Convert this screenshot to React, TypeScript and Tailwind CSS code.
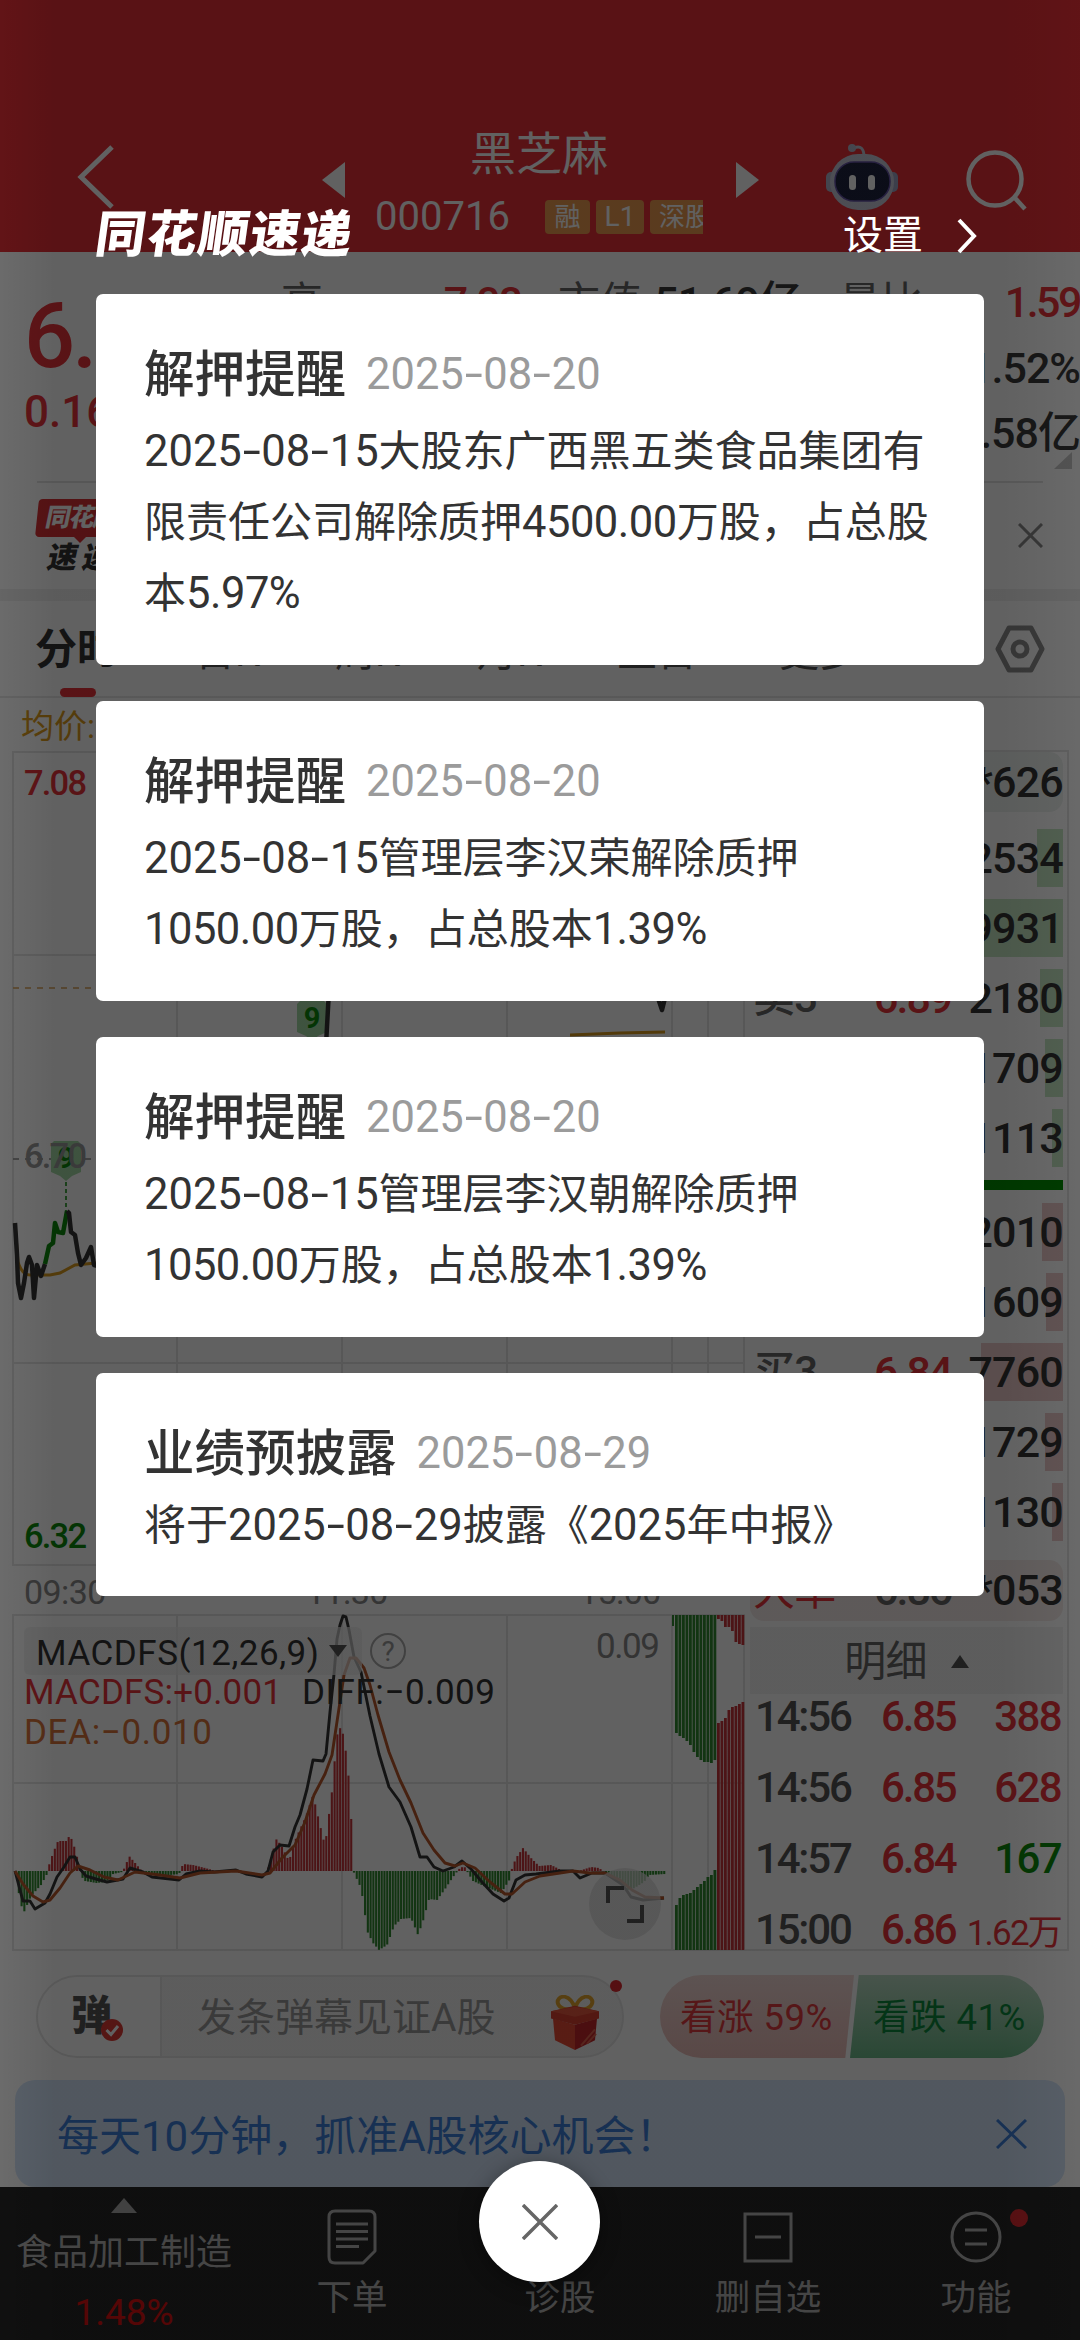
import { clsx } from "clsx"
import type { ReactNode } from "react"

type Point = [number, number]

const toPath = (pts: Point[]) => pts.map(([x, y]) => `${x},${y}`).join(" ")

// Linear interpolation between control points, sampled once per bar.
const sampleBars = (pts: Point[], step: number) => {
  const out: Point[] = []
  let i = 0
  for (let x = pts[0][0]; x <= pts[pts.length - 1][0]; x += step) {
    while (i < pts.length - 2 && pts[i + 1][0] < x) i++
    const [x0, y0] = pts[i]
    const [x1, y1] = pts[i + 1]
    out.push([x, y0 + ((y1 - y0) * (x - x0)) / (x1 - x0)])
  }
  return out
}

const DIFF: Point[] = [
  [15, 1871], [20, 1890], [23, 1901], [30, 1901], [35, 1909], [45, 1903], [50, 1894], [57, 1877],
  [64, 1867], [70, 1857], [75, 1857], [80, 1869], [86, 1876], [96, 1879], [107, 1882], [123, 1879],
  [130, 1868], [143, 1872], [152, 1877], [179, 1880], [186, 1874], [200, 1871], [214, 1872],
  [236, 1870], [246, 1874], [262, 1877], [268, 1871], [273, 1852], [280, 1845], [289, 1846],
  [295, 1827], [300, 1815], [307, 1789], [313, 1760], [323, 1761], [326, 1754], [330, 1712],
  [334, 1674], [337, 1639], [340, 1625], [343, 1616], [346, 1617], [349, 1630], [354, 1657],
  [361, 1672], [370, 1716], [379, 1754], [389, 1787], [400, 1802], [411, 1827], [420, 1857],
  [427, 1857], [434, 1867], [443, 1871], [454, 1867], [462, 1861], [471, 1869], [482, 1882],
  [493, 1894], [504, 1901], [509, 1898], [516, 1880], [525, 1875], [536, 1874], [560, 1871],
  [573, 1871], [580, 1878], [592, 1873], [605, 1873], [623, 1885], [631, 1897], [643, 1900],
  [664, 1898],
]

const DEA: Point[] = [
  [15, 1871], [23, 1884], [33, 1896], [43, 1902], [50, 1900], [60, 1888], [70, 1873], [78, 1866],
  [90, 1870], [104, 1877], [118, 1880], [135, 1872], [160, 1875], [180, 1878], [200, 1873],
  [236, 1871], [262, 1875], [270, 1873], [282, 1858], [295, 1845], [305, 1822], [314, 1795],
  [325, 1774], [332, 1755], [338, 1715], [344, 1675], [350, 1658], [356, 1658], [364, 1668],
  [370, 1685], [378, 1715], [389, 1752], [400, 1780], [411, 1803], [423, 1833], [434, 1850],
  [445, 1863], [455, 1866], [463, 1863], [475, 1868], [490, 1882], [505, 1894], [512, 1894],
  [525, 1882], [540, 1876], [560, 1873], [573, 1871], [590, 1873], [605, 1873], [620, 1880],
  [632, 1890], [645, 1897], [664, 1898],
]

const MACD: Point[] = [
  [15, 0], [17, -18], [20, -34], [23, -41], [30, -25], [40, -14], [46, -3], [47, 3], [52, 18],
  [57, 30], [65, 30], [69, 36], [74, 22], [78, 6], [80, -5], [84, -10], [95, -12], [105, -11],
  [112, -3], [121, -1], [124, 4], [128, 15], [135, 7], [140, 1], [145, -1], [160, -5], [178, -3],
  [182, 7], [192, 6], [204, 3], [215, 0], [265, 0], [268, 5], [272, 20], [275, 32], [280, 26],
  [288, 10], [295, 33], [305, 55], [312, 76], [318, 50], [324, 25], [329, 65], [332, 88],
  [335, 130], [338, 145], [343, 135], [348, 90], [352, 20], [353, -3], [358, -12], [362, -28],
  [366, -60], [372, -72], [378, -79], [386, -74], [393, -55], [400, -48], [410, -47], [417, -64],
  [422, -50], [428, -28], [436, -29], [444, -18], [452, -6], [458, 2], [463, 5], [467, -2],
  [472, -10], [485, -16], [500, -22], [509, -8], [511, 3], [515, 13], [522, 23], [530, 13],
  [538, 5], [550, 6], [558, 2], [565, -1], [575, -1], [590, 4], [598, 3], [602, 0], [608, -5],
  [620, -8], [628, -20], [635, -16], [643, -11], [648, -4], [664, -3],
]

const BASE = 1871

const sells = [
  { label: "卖5", price: "6.91", vol: "2534", bar: "w-[26px]" },
  { label: "卖4", price: "6.90", vol: "9931", bar: "w-[100px]" },
  { label: "卖3", price: "6.89", vol: "2180", bar: "w-[23px]" },
  { label: "卖2", price: "6.88", vol: "1709", bar: "w-[18px]" },
  { label: "卖1", price: "6.87", vol: "1113", bar: "w-[11px]" },
]

const buys = [
  { label: "买1", price: "6.86", vol: "2010", bar: "w-[21px]" },
  { label: "买2", price: "6.85", vol: "1609", bar: "w-[17px]" },
  { label: "买3", price: "6.84", vol: "7760", bar: "w-[82px]" },
  { label: "买4", price: "6.83", vol: "1729", bar: "w-[18px]" },
  { label: "买5", price: "6.82", vol: "1130", bar: "w-[11px]" },
]

const ticks = [
  { time: "14:56", price: "6.85", vol: "388", up: true },
  { time: "14:56", price: "6.85", vol: "628", up: true },
  { time: "14:57", price: "6.84", vol: "167", up: false },
  { time: "15:00", price: "6.86", vol: "1.62万", up: true },
]

const notices = [
  {
    title: "解押提醒",
    date: "2025-08-20",
    lines: ["2025-08-15大股东广西黑五类食品集团有", "限责任公司解除质押4500.00万股，占总股", "本5.97%"],
  },
  {
    title: "解押提醒",
    date: "2025-08-20",
    lines: ["2025-08-15管理层李汉荣解除质押", "1050.00万股，占总股本1.39%"],
  },
  {
    title: "解押提醒",
    date: "2025-08-20",
    lines: ["2025-08-15管理层李汉朝解除质押", "1050.00万股，占总股本1.39%"],
  },
  {
    title: "业绩预披露",
    date: "2025-08-29",
    lines: ["将于2025-08-29披露《2025年中报》"],
  },
]

// Latin runs are set slightly larger than the Chinese text, with wide hyphens.
const Mixed = ({ text }: { text: string }) => (
  <>
    {text.split(/([\d.%]+|-)/).map((part, i) => {
      if (part === "-") {
        return (
          <span key={i} className="inline-block w-[19.5px] scale-x-150 text-center text-[43.5px] leading-none">
            -
          </span>
        )
      }
      return /^[\d.%]+$/.test(part) ? (
        <span key={i} className={clsx("text-[43.5px] leading-none", part.includes(".") && "tracking-[-0.5px]")}>
          {part}
        </span>
      ) : (
        part
      )
    })}
  </>
)

const Header = () => (
  <header className="flex h-[252px] items-start bg-[#ea2f36] pt-[124px] text-white">
    <svg className="ml-[75px] mt-[20px] h-[66px] w-[42px]" viewBox="0 0 42 66" fill="none" stroke="white" strokeWidth="5">
      <path d="M37 3L6 33L37 63" />
    </svg>
    <svg className="ml-[205px] mt-[38px] h-[36px] w-[23px]" viewBox="0 0 23 36" fill="white">
      <path d="M23 0V36L0 18Z" />
    </svg>
    <div className="ml-[32px] flex w-[328px] flex-col">
      <div className="-ml-[4px] h-[62px] text-center text-[46px] leading-[61px]">黑芝麻</div>
      <div className="flex h-[62px] items-center">
        <span className="-ml-[2px] w-[170px] shrink-0 text-[40px]">000716</span>
        <div className="flex h-[34px] w-[158px] shrink-0 items-center gap-[6px] overflow-hidden text-[26px] leading-[34px]">
          <span className="w-[45px] shrink-0 rounded-[4px] bg-[#ec9a50] text-center">融</span>
          <span className="w-[48px] shrink-0 rounded-[4px] bg-[#ec9a50] text-center text-[28px]">L1</span>
          <span className="w-[100px] shrink-0 rounded-[4px] bg-[#ec9a50] pl-[9px]">深股通</span>
        </div>
      </div>
    </div>
    <svg className="ml-[31px] mt-[38px] h-[36px] w-[23px]" viewBox="0 0 23 36" fill="white">
      <path d="M0 0V36L23 18Z" />
    </svg>
    <svg className="ml-[67px] mt-[19px] h-[68px] w-[72px]" viewBox="0 0 72 68">
      <path d="M28 5Q38 1 38 14" fill="none" stroke="#c3c7d8" strokeWidth="3" />
      <circle cx="26" cy="5" r="4" fill="#b4b9ce" />
      <rect x="0" y="29" width="12" height="20" rx="5" fill="#b0b5cd" />
      <rect x="60" y="29" width="12" height="20" rx="5" fill="#9ea4c4" />
      <rect x="4" y="11" width="64" height="56" rx="28" fill="#c9cbdb" />
      <rect x="9" y="19" width="55" height="39" rx="19" fill="#1e2340" stroke="#6553a8" strokeWidth="1.5" />
      <rect x="23" y="32" width="7" height="15" rx="3.5" fill="#fff" />
      <rect x="42" y="32" width="7" height="15" rx="3.5" fill="#fff" />
    </svg>
    <svg className="ml-[68px] mt-[25px] h-[62px] w-[62px]" viewBox="0 0 62 62" fill="none" stroke="white" strokeWidth="4.5">
      <circle cx="29" cy="30" r="26.5" />
      <path d="M48 48L59 60" />
    </svg>
  </header>
)

const Quote = () => (
  <section className="flex h-[229px] pt-[17px]">
    <div className="w-[281px] shrink-0 pl-[24px] font-medium text-[#e9333a]">
      <div className="h-[98px] text-[90px] leading-[135px] tracking-[-3px]">6.86</div>
      <div className="pt-[19px] text-[44px] leading-[52px]">0.16</div>
    </div>
    <div className="flex flex-col text-[43px] font-medium text-[#3a3a3a]">
      <div className="flex h-[66px] items-center whitespace-nowrap">
        <div className="flex w-[240px] items-center justify-between">
          <span className="text-[42px] font-normal text-[#666]">高</span>
          <span className="tracking-[-2px] text-[#e9333a]">7.08</span>
        </div>
        <div className="ml-[37px] flex w-[243px] items-center justify-between">
          <span className="text-[42px] font-normal text-[#666]">市值</span>
          <span className="tracking-[-1px]">51.69亿</span>
        </div>
        <div className="ml-[38px] flex w-[241px] items-center justify-between">
          <span className="text-[42px] font-normal text-[#666]">量比</span>
          <span className="tracking-[-2.5px] text-[#e9333a]">1.59</span>
        </div>
      </div>
      <div className="h-[65px] text-right leading-[66px] tracking-[-1px]">1.52%</div>
      <div className="h-[66px] text-right leading-[66px] tracking-[-1px]">0.58亿</div>
      <svg className="-mt-[14px] ml-[773px] h-[17px] w-[18px]" viewBox="0 0 18 17" fill="#c8c8c8">
        <path d="M18 0V17H0Z" />
      </svg>
    </div>
  </section>
)

const NewsStrip = () => (
  <section className="mx-[37px] flex h-[108px] items-start justify-between border-t-2 border-[#e2e2e2] pt-[16px]">
    <div>
      <div className="h-[38px] w-[96px] -skew-x-6 rounded-[4px] bg-[#d93034] pl-[9px] text-[25px] font-black leading-[38px] text-white">
        <span className="inline-block -skew-x-6 whitespace-nowrap tracking-[-1px]">同花顺</span>
      </div>
      <svg className="ml-[37px] h-[6px] w-[12px]" viewBox="0 0 12 6" fill="#d93034">
        <path d="M0 0H12L6 6Z" />
      </svg>
      <div className="ml-[11px] -skew-x-12 text-[30px] font-black leading-[30px] tracking-[5px] text-[#333]">速递</div>
    </div>
    <svg className="mt-[24px] h-[25px] w-[25px]" viewBox="0 0 25 25" stroke="#888" strokeWidth="3">
      <path d="M1 1L24 24M24 1L1 24" />
    </svg>
  </section>
)

const Tabs = () => (
  <nav className="flex h-[97px] items-start border-b-2 border-[#e8e8e8] pt-[21px] text-[40px] leading-[62px] text-[#555]">
    <div className="ml-[35px] w-[160px] text-[42px] font-bold leading-[56px] text-[#333]">
      <div>分时</div>
      <div className="ml-[25px] mt-[10px] h-[9px] w-[36px] rounded-full bg-[#e9333a]" />
    </div>
    <span className="w-[140px]">日K</span>
    <span className="w-[142px]">周K</span>
    <span className="w-[140px]">月K</span>
    <span className="w-[162px]">五日</span>
    <span className="w-[216px]">更多</span>
    <svg className="mt-[3px] h-[48px] w-[50px]" viewBox="0 0 50 48" fill="none" stroke="#8c8c8c" strokeWidth="5" strokeLinejoin="round">
      <path d="M14 3H36L47 24L36 45H14L3 24Z" />
      <circle cx="25" cy="24" r="7" />
    </svg>
  </nav>
)

const NineFlag = ({ x, y }: { x: number; y: number }) => (
  <g>
    <path d={`M${x - 15} ${y + 3}l3-3h24l3 3v28l-9 4l-6 5l-6-5l-9-4z`} fill="#a4d9a6" />
    <text x={x} y={y + 27} textAnchor="middle" fontSize="29" fontWeight="700" fill="#0a8a0a">
      9
    </text>
  </g>
)

const PriceChart = () => (
  <svg className="h-[815px] w-[733px]" viewBox="12 751 733 815" fill="none">
    <path
      d="M13 752H744V1565H13ZM13 955H744M13 1363H744M177 752V1565M342 752V1565M507 752V1565M672 752V1565M708 752V1565"
      stroke="#e5e5e5"
      strokeWidth="2"
    />
    <path d="M13 988H672" stroke="#d9a35a" strokeWidth="1.5" strokeDasharray="6 6" />
    <path d="M13 1159H672" stroke="#888" strokeWidth="1.5" strokeDasharray="6 6" />
    <path d="M15 1223L18 1262Q22 1275 30 1275H50L60 1273L75 1265L96 1263" stroke="#d99a1c" strokeWidth="3" />
    <path d="M570 1035L620 1033L665 1032" stroke="#d99a1c" strokeWidth="3" />
    <g fontFamily="Roboto" fontSize="34.5" fontWeight="500">
      <NineFlag x={66} y={1141} />
      <NineFlag x={312} y={1001} />
      <text x="24" y="795" textLength="63" fill="#e9333a">7.08</text>
      <text x="24" y="1168" textLength="63" fill="#999">6.70</text>
      <text x="24" y="1548" textLength="63" fill="#0a8a0a">6.32</text>
    </g>
    <path d="M66 1182V1211" stroke="#0a8a0a" strokeWidth="1.5" strokeDasharray="4 3" />
    <g strokeWidth="4.5" strokeLinejoin="round">
      <path d="M15 1223L17 1255L18 1283L21 1298L24 1283L27 1263L29 1257L32 1265L34 1298L37 1265L41 1276L45 1264" stroke="#333" />
      <path d="M45 1264L49 1246L53 1243L55 1223L58 1232L63 1233L67 1211" stroke="#0a8a0a" />
      <path d="M67 1211L69 1213L71 1232L75 1235L78 1253L81 1265L86 1258L91 1247L94 1265L98 1266M329 990L326 1045M658 998L662 1010L665 998" stroke="#333" />
    </g>
  </svg>
)

const MacdChart = () => {
  const bars = sampleBars(MACD, 2.77)
  return (
    <svg className="h-[337px] w-[733px]" viewBox="12 1614 733 337" fill="none">
      <path
        d="M13 1615H744V1950H13ZM13 1783H744M177 1615V1950M342 1615V1950M507 1615V1950M672 1615V1950M708 1615V1950"
        stroke="#e5e5e5"
        strokeWidth="2"
      />
      {bars.map(([x, v]) => (
        <rect
          key={x}
          x={x}
          y={v > 0 ? BASE - v : BASE}
          width="2.1"
          height={Math.abs(v)}
          fill={v > 0 ? "#c8353a" : "#2f8a2f"}
        />
      ))}
      {Array.from({ length: 12 }, (_, i) => {
        const top = [1733, 1736, 1738, 1741, 1745, 1752, 1757, 1760, 1762, 1762, 1763, 1760][i]
        const low = [1905, 1898, 1895, 1894, 1893, 1890, 1887, 1884, 1881, 1877, 1875, 1870][i]
        return (
          <g key={i} fill="#2f8a2f">
            <rect x={675 + i * 3.5} y="1615" width="2.8" height={top - 1615} />
            <rect x={675 + i * 3.5} y={low} width="2.8" height={1950 - low} />
          </g>
        )
      })}
      <rect x="672" y="1615" width="2" height="11" fill="#2f8a2f" />
      {Array.from({ length: 8 }, (_, i) => {
        const top = [1619, 1621, 1627, 1627, 1631, 1642, 1644, 1645][i]
        const low = [1723, 1721, 1718, 1710, 1707, 1706, 1704, 1702][i]
        return (
          <g key={i} fill="#c8353a">
            <rect x={717 + i * 3.5} y="1615" width="2.8" height={top - 1615} />
            <rect x={717 + i * 3.5} y={low} width="2.8" height={1950 - low} />
          </g>
        )
      })}
      <polyline points={toPath(DIFF)} stroke="#333" strokeWidth="2.9" strokeLinejoin="round" />
      <polyline points={toPath(DEA)} stroke="#b8562a" strokeWidth="2.9" strokeLinejoin="round" />
      <rect x="24" y="1627" width="338" height="48" rx="6" fill="#eee" fillOpacity="0.7" />
      <path d="M329 1645H347L338 1657Z" fill="#555" />
      <circle cx="388" cy="1651" r="17" stroke="#aaa" strokeWidth="2" />
      <g fontFamily="Roboto" fontSize="35">
        <text x="388" y="1661" textAnchor="middle" fontSize="28" fill="#999">?</text>
        <text x="36" y="1665" textLength="283" fill="#333">MACDFS(12,26,9)</text>
        <text x="24" y="1704" textLength="258" fill="#e9333a">MACDFS:+0.001</text>
        <text x="302" y="1704" textLength="193" fill="#333">DIFF:−0.009</text>
        <text x="24" y="1744" textLength="188" fill="#d9743a">DEA:−0.010</text>
        <text x="596" y="1658" textLength="64" fill="#888">0.09</text>
      </g>
      <circle cx="625" cy="1904" r="36" fill="#ddd" fillOpacity="0.75" />
      <path d="M608 1903V1888H624M627 1921H642V1905" stroke="#555" strokeWidth="4" />
    </svg>
  )
}

const DepthRow = ({ label, price, vol, bar, tone }: { label: string; price: string; vol: string; bar: string; tone: string }) => (
  <div className="relative flex h-[58px] items-center">
    <div className={clsx("absolute right-0 top-0 h-full", bar, tone)} />
    <span className="relative w-[124px] pl-[3px] text-[42px] text-[#666]">{label}</span>
    <span className="relative tracking-[-2px] text-[#e9333a]">{price}</span>
    <span className="relative ml-auto text-[#333]">{vol}</span>
  </div>
)

const BigOrder = ({ label, price, vol, className }: { label: string; price: string; vol: string; className: string }) => (
  <div className={clsx("flex items-center rounded-[14px]", className)}>
    <span className="w-[124px] pl-[3px] text-[42px] font-normal text-[#e9333a]">{label}</span>
    <span className="tracking-[-2px] text-[#666]">{price}</span>
    <span className="ml-auto text-[#333]">{vol}</span>
  </div>
)

const OrderBook = () => (
  <div className="h-[1201px] w-[324px] border-y-2 border-r-2 border-[#e5e5e5] pl-[5px] pr-[4px] text-[43px] font-medium leading-none tracking-[-0.8px]">
    <BigOrder label="大单" price="6.87" vol="*626" className="h-[60px] bg-[#edf2ef]" />
    <div className="mt-[17px] flex flex-col gap-[12px]">
      {sells.map((row) => (
        <DepthRow key={row.label} {...row} tone="bg-[#c5e7c3]" />
      ))}
    </div>
    <div className="my-[13px] h-[10px] bg-[#008f00]" />
    <div className="flex flex-col gap-[12px]">
      {buys.map((row) => (
        <DepthRow key={row.label} {...row} tone="bg-[#eccaca]" />
      ))}
    </div>
    <BigOrder label="大单" price="6.86" vol="*053" className="mt-[19px] h-[61px] bg-[#f5ebe9]" />
    <div className="mt-[6px] flex h-[67px] items-center justify-center gap-[24px] bg-[#f3f3f3] pt-[2px] text-[42px] font-normal text-[#666]">
      <span>明细</span>
      <svg className="h-[13px] w-[18px]" viewBox="0 0 18 13" fill="#555">
        <path d="M9 0L18 13H0Z" />
      </svg>
    </div>
    <div className="flex flex-col gap-[27px] pr-[2px] pt-[1px] text-[42px]">
      {ticks.map(({ time, price, vol, up }, i) => (
        <div key={i} className="flex h-[44px] items-center">
          <span className="w-[131px] pl-[5px] tracking-[-2.2px] text-[#555]">{time}</span>
          <span className="tracking-[-2.2px] text-[#e9333a]">{price}</span>
          <span
            className={clsx(
              "ml-auto whitespace-nowrap",
              up ? "text-[#e9333a]" : "text-[#0a8a0a]",
              vol.length > 4 ? "pt-[6px] text-[35px] font-normal tracking-[-1.8px]" : "tracking-[-1.6px]"
            )}
          >
            {vol}
          </span>
        </div>
      ))}
    </div>
  </div>
)

const Danmu = () => (
  <section className="flex h-[83px] items-center pl-[36px]">
    <div className="flex h-[83px] w-[588px] items-center rounded-full border-2 border-[#e6e6e6] bg-[#f3f3f3]">
      <div className="flex h-full w-[124px] items-center rounded-l-full border-r-2 border-[#e6e6e6] bg-white pl-[33px]">
        <div className="relative text-[41px] font-black leading-none text-[#555]">
          弹
          <svg className="absolute -bottom-[4px] left-[30px] h-[22px] w-[22px]" viewBox="0 0 22 22">
            <circle cx="11" cy="11" r="11" fill="#e03a34" />
            <path d="M5.5 11L10 15.5L17 7" fill="none" stroke="#fff" strokeWidth="3" />
          </svg>
        </div>
      </div>
      <span className="ml-[35px] whitespace-nowrap pt-[3px] text-[39px] text-[#999]">发条弹幕见证A股</span>
      <div className="relative ml-auto mr-[22px]">
        <svg className="mt-[12px] h-[56px] w-[50px]" viewBox="0 0 50 62" preserveAspectRatio="none">
          <path d="M25 15C4 20 4 0 15 2Q22 4 25 15Q28 4 35 2C46 0 46 20 25 15Z" fill="none" stroke="#e5a52c" strokeWidth="4" />
          <path d="M3 26L25 33V61L5 50Z" fill="#e84a34" />
          <path d="M47 26L25 33V61L45 50Z" fill="#c4262a" />
          <path d="M1 18L25 12L49 18V26L25 33L1 26Z" fill="#d9402f" />
          <path d="M1 18L25 24L49 18L25 13Z" fill="#e8583f" />
          <path d="M31 56L45 38M37 54L46 43" stroke="#e2604c" strokeWidth="2" />
        </svg>
        <span className="absolute -right-[22px] -top-[3px] size-[12px] rounded-full bg-[#e02a30]" />
      </div>
    </div>
    <div className="ml-[36px] flex h-[83px] w-[384px] overflow-hidden rounded-full text-[36.5px] leading-[86px] tracking-[0.5px]">
      <div className="w-[194px] whitespace-nowrap bg-linear-to-b from-[#f3dad7] to-[#eabdb9] pl-[20px] text-[#e23b3e] [clip-path:polygon(0_0,100%_0,95.5%_100%,0_100%)]">
        看涨 59%
      </div>
      <div className="-ml-[4px] w-[194px] whitespace-nowrap bg-linear-to-b from-[#bcdcc6] to-[#6dbb8b] pl-[23px] text-[#0b8a3c] [clip-path:polygon(4.5%_0,100%_0,100%_100%,0_100%)]">
        看跌 41%
      </div>
    </div>
  </section>
)

const Banner = () => (
  <section className="mx-[15px] mt-[22px] flex h-[107px] items-center justify-between rounded-[20px] bg-[#d4e5fa] pl-[42px] pr-[38px] text-[#3d7fd9]">
    <span className="pt-[5px] text-[42px]">每天10分钟，抓准A股核心机会！</span>
    <svg className="h-[30px] w-[31px]" viewBox="0 0 31 30" stroke="#3d7fd9" strokeWidth="3">
      <path d="M1 1L30 29M30 1L1 29" />
    </svg>
  </section>
)

const NavItem = ({ label, className, children }: { label: string; className: string; children?: ReactNode }) => (
  <div className={clsx("flex flex-col items-center pt-[22px]", className)}>
    <div className="relative h-[62px]">{children}</div>
    <div className="text-[35.5px] leading-[54px]">{label}</div>
  </div>
)

const BottomBar = () => (
  <footer className="flex h-[153px] bg-[#262626] text-[#b5b5b5]">
    <div className="flex w-[248px] flex-col items-center pt-[11px]">
      <svg className="h-[15px] w-[26px]" viewBox="0 0 26 15" fill="#aaa">
        <path d="M13 0L26 15H0Z" />
      </svg>
      <div className="mt-[14px] whitespace-nowrap text-[36px] leading-[52px]">食品加工制造</div>
      <div className="mt-[8px] text-[37px] leading-[52px] text-[#e00f0f]">1.48%</div>
    </div>
    <NavItem label="下单" className="w-[208px]">
      <svg className="h-[56px] w-[50px]" viewBox="0 0 50 56" fill="none" stroke="#b5b5b5" strokeWidth="3">
        <path d="M8 2H42Q48 2 48 8V42L36 54H8Q2 54 2 48V8Q2 2 8 2Z" strokeLinejoin="round" />
        <path d="M9 15H41M9 22.5H41M9 30H41M9 37.5H32" />
      </svg>
    </NavItem>
    <NavItem label="诊股" className="w-[208px]" />
    <NavItem label="删自选" className="w-[208px]">
      <svg className="mt-[3px] h-[51px] w-[50px]" viewBox="0 0 50 51" fill="none" stroke="#b5b5b5" strokeWidth="3">
        <path d="M2 2H48V49H2ZM12 25H38" />
      </svg>
    </NavItem>
    <NavItem label="功能" className="w-[208px]">
      <svg className="mt-[2px] h-[52px] w-[52px]" viewBox="0 0 52 52" fill="none" stroke="#b5b5b5" strokeWidth="3">
        <circle cx="26" cy="26" r="24" />
        <path d="M15 19H37M15 33H37" />
      </svg>
      <span className="absolute -right-[26px] top-0 size-[18px] rounded-full bg-[#e02a30]" />
    </NavItem>
  </footer>
)

const NoticePopup = () => (
  <div className="absolute inset-0 flex flex-col items-center pt-[206px]">
    <div className="flex h-[88px] w-[888px] items-start justify-between text-white">
      <div className="-skew-x-[8deg] pt-[1px] text-[50px] font-black leading-[56px] tracking-[1.5px]">同花顺速递</div>
      <div className="flex items-center gap-[34px] pr-[7px] pt-[2px] text-[40px] leading-[56px]">
        设置
        <svg className="h-[36px] w-[20px]" viewBox="0 0 20 36" fill="none" stroke="white" strokeWidth="4">
          <path d="M2 2L17 18L2 34" />
        </svg>
      </div>
    </div>
    <div className="flex w-[888px] flex-col gap-[36px]">
      {notices.map((notice, i) => (
        <article key={i} className="rounded-[7px] bg-white pb-[36px] pl-[48px] pt-[45px] text-[#333]">
          <div className="mb-[5px] flex h-[72px] items-center">
            <h2 className="text-[50.5px] font-medium">{notice.title}</h2>
            <span className="ml-[20px] whitespace-nowrap text-[#9b9b9b]">
              <Mixed text={notice.date} />
            </span>
          </div>
          {notice.lines.map((line) => (
            <p
              key={line}
              className={clsx("whitespace-nowrap text-[42px]", notice.lines.length > 1 ? "h-[71px] leading-[71px]" : "h-[65px] leading-[62px]")}
            >
              <Mixed text={line} />
            </p>
          ))}
        </article>
      ))}
    </div>
    <button
      type="button"
      aria-label="关闭"
      className="absolute left-[479px] top-[2161px] flex size-[121px] items-center justify-center rounded-full bg-white shadow-[0_4px_20px_rgba(0,0,0,0.4)]"
    >
      <svg className="h-[36px] w-[36px]" viewBox="0 0 36 36" stroke="#666" strokeWidth="3.5">
        <path d="M1 1L35 35M35 1L1 35" />
      </svg>
    </button>
  </div>
)

const App = () => (
  <div className="relative h-[2340px] w-[1080px] overflow-hidden bg-white font-['Roboto','Noto_Sans_CJK_SC',sans-serif]">
    <Header />
    <Quote />
    <NewsStrip />
    <div className="h-[12px] bg-[#f0f0f0]" />
    <Tabs />
    <section className="flex h-[1253px] items-end">
      <div className="ml-[12px] w-[733px]">
        <div className="pl-[9px] text-[33px] leading-[48px] text-[#dd9c1c]">均价:6.82</div>
        <PriceChart />
        <div className="flex h-[48px] items-center pl-[12px] text-[34px] leading-none tracking-[-0.6px] text-[#8a8a8a]">
          <span className="w-[282px] pt-[3px]">09:30</span>
          <span className="w-[273px] pt-[3px]">11:30</span>
          <span className="pt-[3px]">15:00</span>
        </div>
        <MacdChart />
      </div>
      <OrderBook />
    </section>
    <div className="h-[24px]" />
    <Danmu />
    <Banner />
    <BottomBar />
    {/* Dimmed backdrop, slightly lighter along both screen edges */}
    <div className="absolute inset-0 bg-[linear-gradient(90deg,rgba(0,0,0,0.58),rgba(0,0,0,0.62)_5%,rgba(0,0,0,0.62)_93%,rgba(0,0,0,0.59))]" />
    <NoticePopup />
  </div>
)

export default App
